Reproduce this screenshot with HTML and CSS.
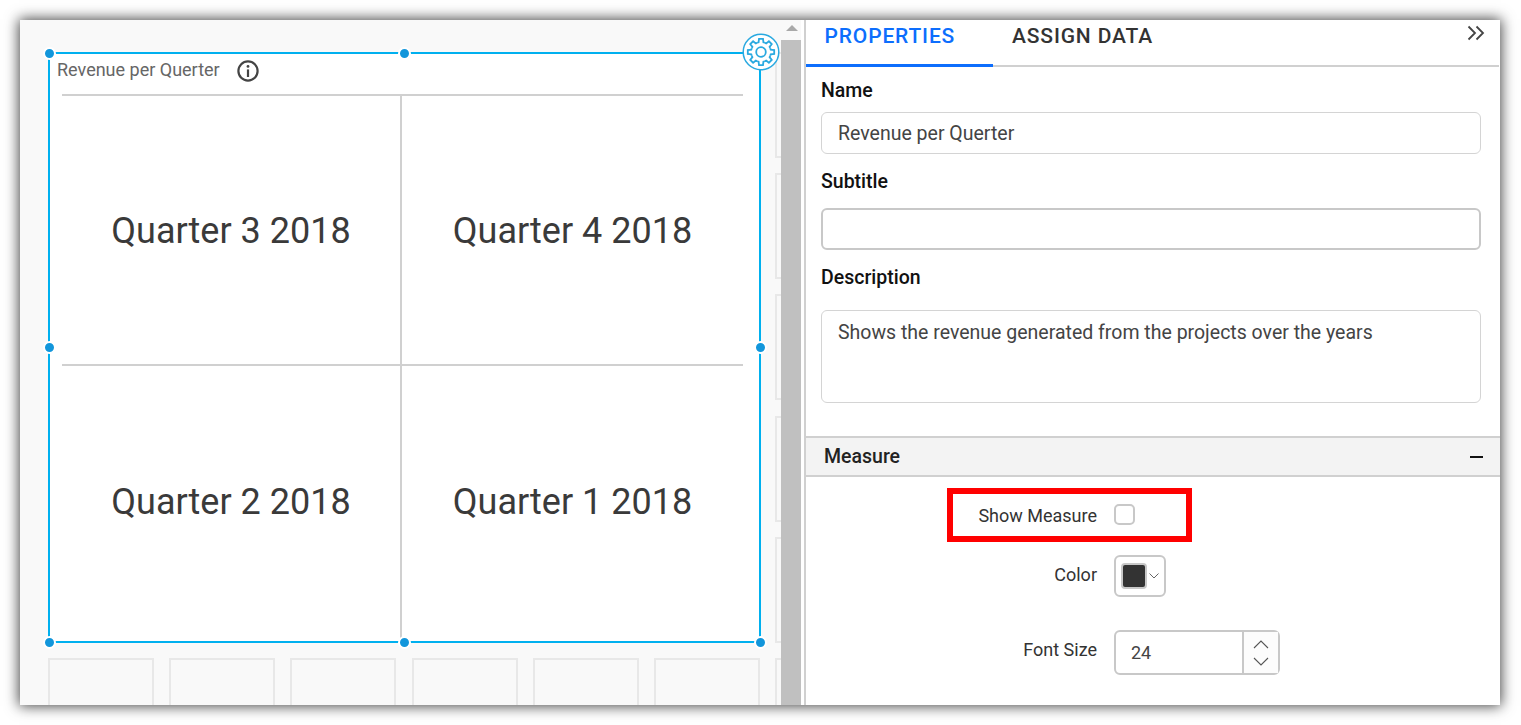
FILE: index.html
```html
<html>
  <head>
    <title>Revenue per Querter</title>
    <link rel="stylesheet" href="styles.css">
  </head>

  <body>
    <div class="window">
      <div class="canvas">
        <div class="tiles">
          <div></div><div></div><div></div><div></div><div></div><div></div><div></div>
          <div></div><div></div><div></div><div></div><div></div><div></div><div></div>
          <div></div><div></div><div></div><div></div><div></div><div></div><div></div>
          <div></div><div></div><div></div><div></div><div></div><div></div><div></div>
          <div></div><div></div><div></div><div></div><div></div><div></div><div></div>
          <div></div><div></div><div></div><div></div><div></div><div></div><div></div>
        </div>

        <div class="widget">
          <div class="widget-title">
            <span>Revenue per Querter</span>
            <svg class="info-icon" width="22" height="22" viewBox="0 0 22 22">
              <circle cx="11" cy="11" r="9.6" fill="none" stroke="#444" stroke-width="2.2"/>
              <circle cx="11" cy="6.4" r="1.4" fill="#444"/>
              <path d="M11 9.4V17" stroke="#444" stroke-width="2.2" fill="none"/>
            </svg>
          </div>

          <div class="treemap">
            <div class="cell">Quarter 3 2018</div>
            <div class="cell">Quarter 4 2018</div>
            <div class="cell">Quarter 2 2018</div>
            <div class="cell">Quarter 1 2018</div>
          </div>

          <span class="handle top-left"></span>
          <span class="handle top-mid"></span>
          <span class="handle mid-left"></span>
          <span class="handle mid-right"></span>
          <span class="handle bottom-left"></span>
          <span class="handle bottom-mid"></span>
          <span class="handle bottom-right"></span>

          <svg class="gear" width="38" height="38" viewBox="-19 -19 38 38">
            <defs>
              <path id="gearTooth" d="M9.24 -3.83L9.7 -2.42L13.2 -2V2L9.7 2.42L9.24 3.83"/>
            </defs>
            <circle r="17.8" fill="#fff" stroke="#29a9e0" stroke-width="1.5"/>
            <g fill="none" stroke="#29a9e0" stroke-width="1.8">
              <circle r="4.8"/>
              <use href="#gearTooth"/>
              <use href="#gearTooth" transform="rotate(45)"/>
              <use href="#gearTooth" transform="rotate(90)"/>
              <use href="#gearTooth" transform="rotate(135)"/>
              <use href="#gearTooth" transform="rotate(180)"/>
              <use href="#gearTooth" transform="rotate(225)"/>
              <use href="#gearTooth" transform="rotate(270)"/>
              <use href="#gearTooth" transform="rotate(315)"/>
            </g>
          </svg>
        </div>
      </div>

      <div class="scrollbar">
        <div class="scroll-arrow"></div>
        <div class="scroll-thumb"></div>
      </div>

      <div class="panel">
        <div class="tabs">
          <div class="tab active">PROPERTIES</div>
          <div class="tab">ASSIGN DATA</div>
          <svg class="collapse" width="18" height="16" viewBox="0 0 18 16">
            <path d="M1.5 1.5L8 8L1.5 14.5M9.5 1.5L16 8L9.5 14.5" fill="none" stroke="#444" stroke-width="1.8"/>
          </svg>
        </div>

        <div class="fields">
          <div class="label">Name</div>
          <div class="text-box name-box">Revenue per Querter</div>
          <div class="label subtitle-label">Subtitle</div>
          <div class="text-box subtitle-box"></div>
          <div class="label description-label">Description</div>
          <div class="text-box description-box">Shows the revenue generated from the projects over the years</div>
        </div>

        <div class="section-head">
          <span>Measure</span>
          <span class="minus"></span>
        </div>

        <div class="settings">
          <div class="row show-row">
            <div class="row-label">Show Measure</div>
            <div class="checkbox"></div>
          </div>
          <div class="row color-row">
            <div class="row-label">Color</div>
            <div class="color-picker">
              <div class="swatch"></div>
              <svg width="10" height="6" viewBox="0 0 10 6">
                <path d="M0.5 0.5L5 5L9.5 0.5" fill="none" stroke="#666" stroke-width="1"/>
              </svg>
            </div>
          </div>
          <div class="row size-row">
            <div class="row-label">Font Size</div>
            <div class="spinner">
              <div class="spinner-value">24</div>
              <div class="spinner-buttons">
                <svg width="16" height="9" viewBox="0 0 16 9">
                  <path d="M1 8L8 1L15 8" fill="none" stroke="#555" stroke-width="1.1"/>
                </svg>
                <svg width="16" height="9" viewBox="0 0 16 9">
                  <path d="M1 1L8 8L15 1" fill="none" stroke="#555" stroke-width="1.1"/>
                </svg>
              </div>
            </div>
          </div>
          <div class="highlight"></div>
        </div>
      </div>
    </div>
  </body>
</html>
```

FILE: styles.css
```css
*, *:before, *:after {
  box-sizing: border-box;
  padding: 0;
  margin: 0;
}

html, body {
  height: 725px;
  overflow: hidden;
}

body {
  padding: 20px 21px 20px 20px;
  background-color: white;
  font-family: Roboto, "Liberation Sans", sans-serif;
}

.window {
  display: flex;
  height: 685px;
  background-color: white;
  box-shadow: 0 0 13px 1px rgba(0, 0, 0, 0.75);
}

/* dashboard canvas */
.canvas {
  position: relative;
  flex: none;
  width: 761px;
  overflow: hidden;
  background-color: #f9f9f9;
}

.tiles {
  position: absolute;
  top: 32px;
  left: 28px;
  display: grid;
  grid-template-columns: repeat(7, 106px);
  grid-auto-rows: 106px;
  gap: 15.2px;
}

.tiles div {
  border: 2px solid #e8e8e8;
}

.widget {
  position: absolute;
  top: 32px;
  left: 28px;
  display: flex;
  flex-direction: column;
  width: 713px;
  height: 591px;
  border: 2px solid #00b0ef;
  background-color: white;
}

.widget-title {
  display: flex;
  align-items: center;
  flex: none;
  height: 40px;
  padding-left: 7px;
  padding-bottom: 9px;
  font-size: 18px;
  color: #666;
}

.info-icon {
  margin-left: 17px;
  margin-top: 2px;
}

.treemap {
  flex: 1;
  display: grid;
  grid-template-columns: 338px 1fr;
  grid-template-rows: 268px 1fr;
  gap: 2px;
  margin: 0 16px 0 12px;
  border-top: 2px solid #d0d0d0;
  background-color: #d0d0d0;
}

.cell {
  display: flex;
  align-items: center;
  justify-content: center;
  padding-top: 2px;
  background-color: white;
  font-size: 36px;
  color: #3a3a3a;
}

.cell:nth-child(n+3) {
  padding-top: 0;
  padding-bottom: 4px;
}

.handle {
  position: absolute;
  width: 13px;
  height: 13px;
  border: 2px solid white;
  border-radius: 50%;
  background-color: #1296db;
}

.top-left { top: -7px; left: -7px; }
.top-mid { top: -7px; left: 348px; }
.mid-left { top: 287px; left: -7px; }
.mid-right { top: 287px; left: 704px; }
.bottom-left { top: 582px; left: -7px; }
.bottom-mid { top: 582px; left: 348px; }
.bottom-right { top: 582px; left: 704px; }

.gear {
  position: absolute;
  top: -21px;
  left: 692px;
}

/* scrollbar between canvas and panel */
.scrollbar {
  flex: none;
  width: 25px;
  padding-right: 3px;
  border-right: 2px solid #d0d0d0;
  background-color: white;
}

.scroll-arrow {
  height: 20px;
  background-color: #f9f9f9;
  position: relative;
}

.scroll-arrow:after {
  content: '';
  position: absolute;
  top: 5px;
  left: 5px;
  border-left: 6px solid transparent;
  border-right: 6px solid transparent;
  border-bottom: 6px solid #a9a9a9;
}

.scroll-thumb {
  height: 665px;
  background-color: #c0c0c0;
}

/* properties panel */
.panel {
  flex: 1;
  min-width: 0;
}

.tabs {
  position: relative;
  display: flex;
  height: 47px;
  margin-right: 1px;
  border-bottom: 2px solid #d0d0d0;
}

.tab {
  padding: 3px 0 0 19px;
  width: 187px;
  font-size: 21px;
  font-weight: 500;
  letter-spacing: 0.85px;
  line-height: 26px;
  color: #333;
}

.tab.active {
  height: 47px;
  padding-left: 18.5px;
  border-bottom: 3px solid #0d6efd;
  color: #0d6efd;
}

.collapse {
  position: absolute;
  top: 5px;
  right: 14px;
}

.fields {
  padding: 0 19px 0 15px;
}

.label {
  padding-top: 12px;
  font-size: 19.5px;
  font-weight: 500;
  line-height: 23px;
  color: #111;
}

.subtitle-label {
  padding-top: 16px;
}

.description-label {
  padding-top: 16px;
}

.text-box {
  padding: 9px 16px;
  border: 1px solid #d4d4d4;
  border-radius: 6px;
  font-size: 19.5px;
  line-height: 24px;
  color: #444;
}

.name-box {
  margin-top: 10px;
  height: 42px;
}

.subtitle-box {
  margin-top: 15px;
  height: 42px;
  border: 2px solid #c8c8c8;
}

.description-box {
  margin-top: 21px;
  height: 93px;
  padding-top: 10px;
}

.section-head {
  display: flex;
  align-items: center;
  justify-content: space-between;
  height: 41px;
  margin-top: 33px;
  padding: 0 17px 0 18px;
  border-top: 2px solid #d0d0d0;
  border-bottom: 2px solid #d0d0d0;
  background-color: #f3f3f3;
  font-size: 19.5px;
  font-weight: 500;
  color: #222;
}

.minus {
  width: 13px;
  height: 2px;
  background-color: #111;
}

.settings {
  position: relative;
}

.row {
  display: flex;
  gap: 17px;
}

.row-label {
  width: 291px;
  text-align: right;
  font-size: 18px;
  line-height: 22px;
  color: #333;
}

.show-row {
  padding-top: 28px;
  align-items: center;
}

.checkbox {
  width: 21px;
  height: 21px;
  margin-top: -3px;
  border: 2px solid #c8c8c8;
  border-radius: 5px;
}

.color-row {
  padding-top: 28px;
}

.color-row .row-label {
  padding-top: 9px;
}

.color-picker {
  display: flex;
  align-items: center;
  gap: 2px;
  width: 52px;
  height: 42px;
  padding-left: 5px;
  border: 2px solid #c8c8c8;
  border-radius: 6px;
}

.swatch {
  width: 26px;
  height: 26px;
  border: 2px solid #c8c8c8;
  border-radius: 4px;
  background-color: #333;
}

.size-row {
  padding-top: 33px;
}

.size-row .row-label {
  padding-top: 9px;
}

.spinner {
  display: flex;
  width: 166px;
  height: 45px;
  border: 2px solid #c8c8c8;
  border-radius: 6px;
}

.spinner-value {
  flex: 1;
  padding: 9px 0 0 15px;
  font-size: 18px;
  line-height: 24px;
  color: #444;
}

.spinner-buttons {
  display: flex;
  flex-direction: column;
  align-items: center;
  justify-content: center;
  gap: 8px;
  width: 36px;
  border-left: 2px solid #c8c8c8;
  background-color: #fcfcfc;
}

/* red annotation box on top of the first row */
.highlight {
  position: absolute;
  top: 11px;
  left: 141px;
  width: 245px;
  height: 54px;
  border: 6px solid #ff0000;
}
```
